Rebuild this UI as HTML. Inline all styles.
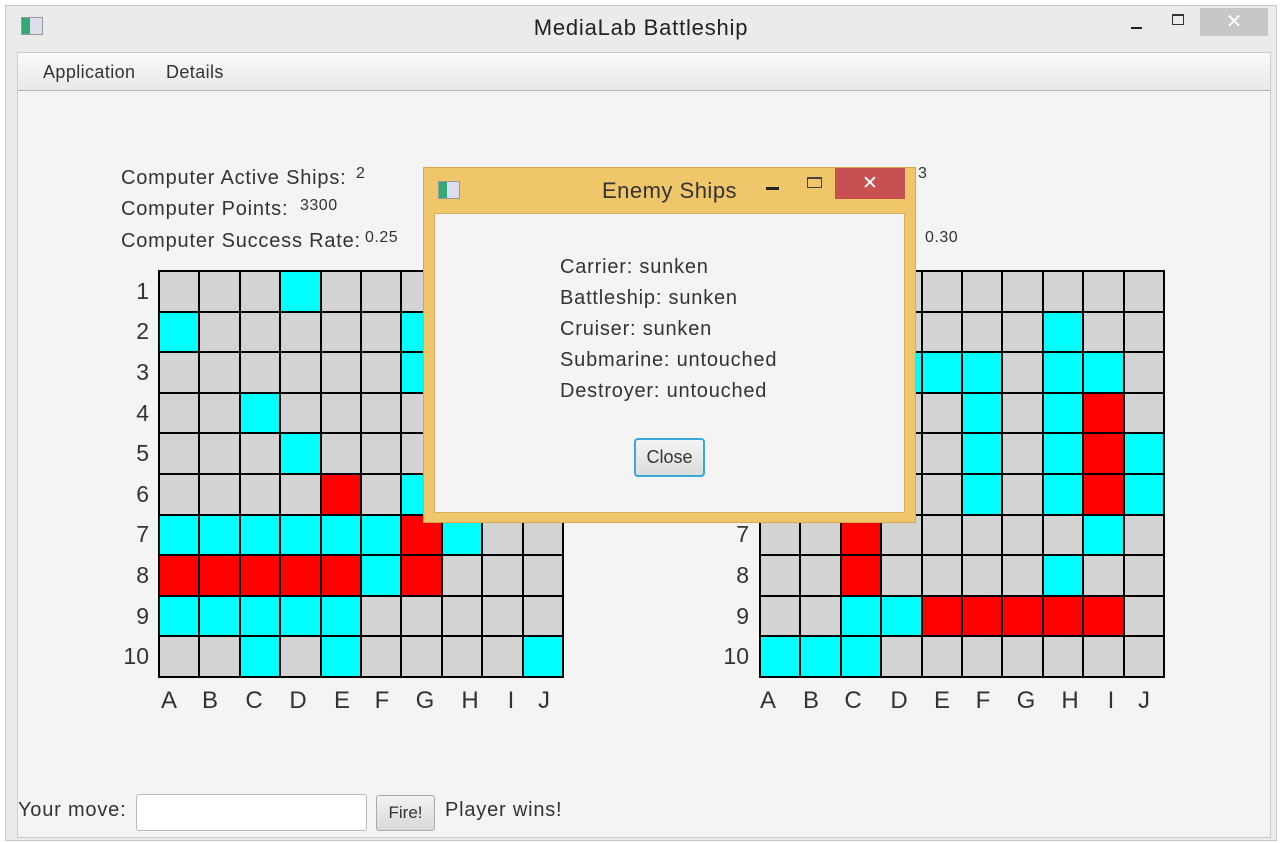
<!DOCTYPE html>
<html><head><style>
*{margin:0;padding:0;box-sizing:border-box}
body{width:1282px;height:843px;background:#fff;font-family:"Liberation Sans",sans-serif;position:relative;overflow:hidden;color:#333}
.a{position:absolute}
.grid{position:absolute;width:406px;height:408px;background:#000;display:grid;grid-template-columns:repeat(10,1fr);grid-template-rows:repeat(10,1fr);gap:2px;padding:2px}
.grid div{background:#d3d3d3}
.grid .c{background:#00ffff}
.grid .r{background:#ff0000}
.num{position:absolute;width:40px;text-align:right;font-size:23px;color:#333}
.let{position:absolute;width:40px;text-align:center;font-size:24px;color:#333}
.t{font-size:20px;letter-spacing:0.8px;color:#333;position:absolute;white-space:nowrap}
.v{font-size:16px;letter-spacing:0.5px}
</style></head><body>
<div class="a" style="left:5px;top:5px;width:1272px;height:836px;background:#ebebeb;border:1px solid #c8c8c8"></div>
<div class="a" style="left:21px;top:17px;width:22px;height:18px;border:1px solid #999;background:linear-gradient(90deg,#3a7 0 40%,#dde 40%)"></div>
<div class="a" style="left:0;top:15px;width:1282px;text-align:center;font-size:22px;letter-spacing:0.8px;color:#222">MediaLab Battleship</div>
<div class="a" style="left:1131px;top:27px;width:11px;height:2px;background:#222"></div>
<div class="a" style="left:1172px;top:14px;width:12px;height:11px;border:1px solid #333;border-top-width:2px"></div>
<div class="a" style="left:1200px;top:8px;width:68px;height:28px;background:#c7c7c7;color:#fff;font-size:20px;text-align:center;line-height:28px">✕</div>
<div class="a" style="left:17px;top:52px;width:1254px;height:786px;background:#f4f4f4;border:1px solid #ccc"></div>
<div class="a" style="left:18px;top:53px;width:1252px;height:38px;background:linear-gradient(#fafafa,#e8e8e8);border-bottom:1px solid #b5b5b5"></div>
<div class="t" style="left:43px;top:62px;font-size:18px;letter-spacing:0.4px">Application</div>
<div class="t" style="left:166px;top:62px;font-size:18px;letter-spacing:0.4px">Details</div>

<div class="t" style="left:121px;top:167px">Computer Active Ships:</div>
<div class="t v" style="left:356px;top:165px">2</div>
<div class="t" style="left:121px;top:198px">Computer Points:</div>
<div class="t v" style="left:300px;top:197px">3300</div>
<div class="t" style="left:121px;top:230px">Computer Success Rate:</div>
<div class="t v" style="left:365px;top:229px">0.25</div>
<div class="t v" style="left:918px;top:165px">3</div>
<div class="t v" style="left:925px;top:229px">0.30</div>

<div class="grid" style="left:158px;top:270px">
<div></div><div></div><div></div><div class="c"></div><div></div><div></div><div></div><div></div><div></div><div></div>
<div class="c"></div><div></div><div></div><div></div><div></div><div></div><div class="c"></div><div></div><div></div><div></div>
<div></div><div></div><div></div><div></div><div></div><div></div><div class="c"></div><div></div><div></div><div></div>
<div></div><div></div><div class="c"></div><div></div><div></div><div></div><div></div><div></div><div></div><div></div>
<div></div><div></div><div></div><div class="c"></div><div></div><div></div><div></div><div></div><div></div><div></div>
<div></div><div></div><div></div><div></div><div class="r"></div><div></div><div class="c"></div><div></div><div></div><div></div>
<div class="c"></div><div class="c"></div><div class="c"></div><div class="c"></div><div class="c"></div><div class="c"></div><div class="r"></div><div class="c"></div><div></div><div></div>
<div class="r"></div><div class="r"></div><div class="r"></div><div class="r"></div><div class="r"></div><div class="c"></div><div class="r"></div><div></div><div></div><div></div>
<div class="c"></div><div class="c"></div><div class="c"></div><div class="c"></div><div class="c"></div><div></div><div></div><div></div><div></div><div></div>
<div></div><div></div><div class="c"></div><div></div><div class="c"></div><div></div><div></div><div></div><div></div><div class="c"></div>
</div>
<div class="grid" style="left:759px;top:270px">
<div></div><div></div><div></div><div></div><div></div><div></div><div></div><div></div><div></div><div></div>
<div></div><div></div><div></div><div></div><div></div><div></div><div></div><div class="c"></div><div></div><div></div>
<div></div><div></div><div></div><div class="c"></div><div class="c"></div><div class="c"></div><div></div><div class="c"></div><div class="c"></div><div></div>
<div></div><div></div><div></div><div></div><div></div><div class="c"></div><div></div><div class="c"></div><div class="r"></div><div></div>
<div></div><div></div><div></div><div></div><div></div><div class="c"></div><div></div><div class="c"></div><div class="r"></div><div class="c"></div>
<div></div><div></div><div></div><div></div><div></div><div class="c"></div><div></div><div class="c"></div><div class="r"></div><div class="c"></div>
<div></div><div></div><div class="r"></div><div></div><div></div><div></div><div></div><div></div><div class="c"></div><div></div>
<div></div><div></div><div class="r"></div><div></div><div></div><div></div><div></div><div class="c"></div><div></div><div></div>
<div></div><div></div><div class="c"></div><div class="c"></div><div class="r"></div><div class="r"></div><div class="r"></div><div class="r"></div><div class="r"></div><div></div>
<div class="c"></div><div class="c"></div><div class="c"></div><div></div><div></div><div></div><div></div><div></div><div></div><div></div>
</div>

<div class="num" style="left:109px;top:278px">1</div><div class="num" style="left:109px;top:318px">2</div><div class="num" style="left:109px;top:359px">3</div><div class="num" style="left:109px;top:400px">4</div><div class="num" style="left:109px;top:440px">5</div><div class="num" style="left:109px;top:481px">6</div><div class="num" style="left:109px;top:521px">7</div><div class="num" style="left:109px;top:562px">8</div><div class="num" style="left:109px;top:603px">9</div><div class="num" style="left:109px;top:643px">10</div>
<div class="num" style="left:709px;top:521px">7</div><div class="num" style="left:709px;top:562px">8</div><div class="num" style="left:709px;top:603px">9</div><div class="num" style="left:709px;top:643px">10</div>

<div class="let" style="left:149px;top:687px">A</div><div class="let" style="left:190px;top:687px">B</div><div class="let" style="left:234px;top:687px">C</div><div class="let" style="left:278px;top:687px">D</div><div class="let" style="left:322px;top:687px">E</div><div class="let" style="left:362px;top:687px">F</div><div class="let" style="left:405px;top:687px">G</div><div class="let" style="left:450px;top:687px">H</div><div class="let" style="left:491px;top:687px">I</div><div class="let" style="left:524px;top:687px">J</div>
<div class="let" style="left:748px;top:687px">A</div><div class="let" style="left:791px;top:687px">B</div><div class="let" style="left:833px;top:687px">C</div><div class="let" style="left:879px;top:687px">D</div><div class="let" style="left:922px;top:687px">E</div><div class="let" style="left:963px;top:687px">F</div><div class="let" style="left:1006px;top:687px">G</div><div class="let" style="left:1050px;top:687px">H</div><div class="let" style="left:1091px;top:687px">I</div><div class="let" style="left:1124px;top:687px">J</div>

<div class="t" style="left:18px;top:799px">Your move:</div>
<div class="a" style="left:136px;top:794px;width:231px;height:37px;background:#fff;border:1px solid #bbb;border-radius:3px"></div>
<div class="a" style="left:376px;top:795px;width:59px;height:36px;background:linear-gradient(#f2f2f2,#d9d9d9);border:1px solid #aaa;border-radius:3px;font-size:17px;text-align:center;line-height:34px">Fire!</div>
<div class="t" style="left:445px;top:799px">Player wins!</div>

<div class="a" style="left:423px;top:167px;width:493px;height:356px;background:#f0c66a;border:1px solid #d8a94a"></div>
<div class="a" style="left:438px;top:181px;width:22px;height:18px;border:1px solid #999;background:linear-gradient(90deg,#3a7 0 40%,#dde 40%)"></div>
<div class="a" style="left:423px;top:178px;width:493px;text-align:center;font-size:22px;letter-spacing:0.5px;color:#333">Enemy Ships</div>
<div class="a" style="left:766px;top:187px;width:13px;height:3px;background:#222"></div>
<div class="a" style="left:807px;top:177px;width:15px;height:11px;border:1px solid #444;border-top-width:2px"></div>
<div class="a" style="left:835px;top:168px;width:70px;height:31px;background:#c75050;color:#fff;font-size:19px;text-align:center;line-height:31px">✕</div>
<div class="a" style="left:434px;top:213px;width:471px;height:300px;background:#f4f4f4;border:1px solid #d4b060"></div>
<div class="t" style="left:560px;top:256px">Carrier: sunken</div>
<div class="t" style="left:560px;top:287px">Battleship: sunken</div>
<div class="t" style="left:560px;top:318px">Cruiser: sunken</div>
<div class="t" style="left:560px;top:349px">Submarine: untouched</div>
<div class="t" style="left:560px;top:380px">Destroyer: untouched</div>
<div class="a" style="left:634px;top:438px;width:71px;height:39px;background:linear-gradient(#f4f4f4,#dcdcdc);border:2px solid #39a9dc;border-radius:4px;font-size:18px;text-align:center;line-height:35px;color:#333">Close</div>
</body></html>
